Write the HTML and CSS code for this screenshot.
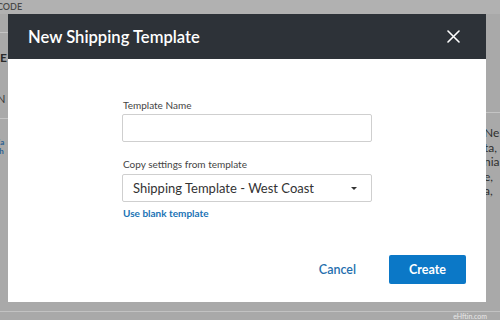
FILE: index.html
```html
<!DOCTYPE html>
<html>
<head>
<meta charset="utf-8">
<link rel="stylesheet" href="styles.css">
</head>
<body>
<div class="page">
  <div class="topbar"><span class="top-text">CODE</span></div>
  <div class="page-body">
    <div class="left-col">
      <div class="rule r1"></div>
      <div class="bold-e">E</div>
      <div class="left-n">N</div>
      <div class="rule r2"></div>
      <div class="left-link">Ca<br>Sh</div>
    </div>
    <div class="mid-col"></div>
    <div class="right-col">
      <div class="rule r3"></div>
      <div class="right-text">Ne<br>ta,<br>nia<br>e,<br>a,</div>
    </div>
  </div>
  <div class="page-foot"><span class="watermark">eHftin.com</span></div>
</div>

<div class="modal">
  <div class="modal-header">
    <h1 class="modal-title">New Shipping Template</h1>
    <button class="close-btn" aria-label="Close">
      <svg width="13" height="13" viewBox="0 0 13 13"><path d="M1 1 L12 12 M12 1 L1 12" stroke="#fff" stroke-width="1.6" stroke-linecap="round"/></svg>
    </button>
  </div>
  <div class="modal-body">
    <div class="form">
      <label class="field-label">Template Name</label>
      <div class="text-input"></div>
      <label class="field-label second">Copy settings from template</label>
      <div class="select">
        <span class="select-value">Shipping Template - West Coast</span>
        <svg class="caret" width="6" height="3" viewBox="0 0 6 3"><path d="M0 0 H6 L3 3 Z" fill="#333"/></svg>
      </div>
      <a class="blank-link">Use blank template</a>
    </div>
  </div>
  <div class="modal-footer">
    <button class="btn-cancel">Cancel</button>
    <button class="btn-create">Create</button>
  </div>
</div>
</body>
</html>
```

FILE: styles.css
```css
* { box-sizing: border-box; }
html, body { margin: 0; padding: 0; }
body {
  width: 500px;
  height: 320px;
  overflow: hidden;
  background: #a9a9a9;
  font-family: Lato, "Open Sans", sans-serif;
  position: relative;
}
.page {
  width: 500px;
  height: 320px;
  display: flex;
  flex-direction: column;
}
.topbar {
  height: 14px;
  background: #b1b1b1;
  overflow: hidden;
}
.top-text {
  display: block;
  margin-left: -3px;
  font-size: 9px;
  line-height: 14px;
  color: #4a4a4a;
  font-weight: 600;
}
.page-body {
  flex: 1;
  display: flex;
}
.left-col {
  width: 8px;
  overflow: hidden;
  white-space: nowrap;
}
.rule { height: 1px; background: #c4c4c4; }
.r1 { margin-top: 18px; width: 8px; }
.bold-e {
  margin-top: 19px;
  font-size: 12px;
  line-height: 12px;
  font-weight: 700;
  color: #2b2b2b;
}
.left-n {
  margin-top: 29px;
  font-size: 11px;
  line-height: 12px;
  color: #3a3a3a;
  margin-left: -3px;
}
.r2 { margin-top: 13px; }
.left-link {
  margin-top: 19px;
  margin-left: -5px;
  font-size: 8px;
  line-height: 9px;
  color: #2a5f90;
  font-weight: 700;
}
.mid-col { flex: 1; }
.right-col {
  width: 14px;
  overflow: hidden;
  white-space: nowrap;
}
.r3 { margin-top: 98px; }
.right-text {
  margin-top: 13px;
  font-size: 12px;
  line-height: 14.5px;
  color: #2e2e2e;
  margin-left: -2px;
}
.page-foot {
  height: 9px;
  border-top: 1px solid #c2c2c2;
  text-align: right;
  padding-right: 13px;
}
.watermark {
  font-size: 7px;
  line-height: 8px;
  color: #e8e8e8;
  display: block;
}

.modal {
  position: absolute;
  left: 8px;
  top: 14px;
  width: 478px;
  height: 288px;
  background: #ffffff;
  display: flex;
  flex-direction: column;
}
.modal-header {
  height: 45px;
  background: #2d3238;
  display: flex;
  align-items: center;
  justify-content: space-between;
  padding: 0 20px 0 20px;
}
.modal-title {
  margin: 0;
  font-size: 16.6px;
  font-weight: 600;
  color: #ffffff;
}
.close-btn {
  background: none;
  border: none;
  padding: 0;
  width: 13px;
  height: 13px;
  display: flex;
  margin-right: 6px;
}
.modal-body {
  flex: 1;
  display: flex;
  justify-content: center;
  padding-top: 39px;
}
.form {
  width: 250px;
  display: flex;
  flex-direction: column;
}
.field-label {
  font-size: 10px;
  line-height: 14px;
  color: #444;
  padding-left: 1px;
  margin-bottom: 2px;
}
.field-label.second { margin-top: 15px; margin-bottom: 3px; }
.text-input {
  height: 28px;
  border: 1px solid #cfcfcf;
  border-radius: 2px;
}
.select {
  height: 28px;
  border: 1px solid #cfcfcf;
  border-radius: 2px;
  display: flex;
  align-items: center;
  justify-content: space-between;
  padding: 0 14px 0 10px;
}
.select-value {
  font-size: 13px;
  color: #333;
}
.caret { margin-top: 1px; }
.blank-link {
  margin-top: 4px;
  font-size: 10px;
  line-height: 14px;
  font-weight: 700;
  color: #1a73b5;
  padding-left: 1px;
}
.modal-footer {
  height: 47px;
  display: flex;
  justify-content: flex-end;
  align-items: flex-start;
  padding: 0 20px 0 0;
  gap: 17px;
}
.btn-cancel {
  background: none;
  border: none;
  font-family: inherit;
  font-size: 12.5px;
  font-weight: 600;
  color: #1f6fae;
  height: 29px;
  padding: 0 16px;
}
.btn-create {
  width: 77px;
  height: 29px;
  background: #0b78c7;
  border: none;
  border-radius: 2px;
  color: #fff;
  font-family: inherit;
  font-size: 12.5px;
  font-weight: 700;
}
```
